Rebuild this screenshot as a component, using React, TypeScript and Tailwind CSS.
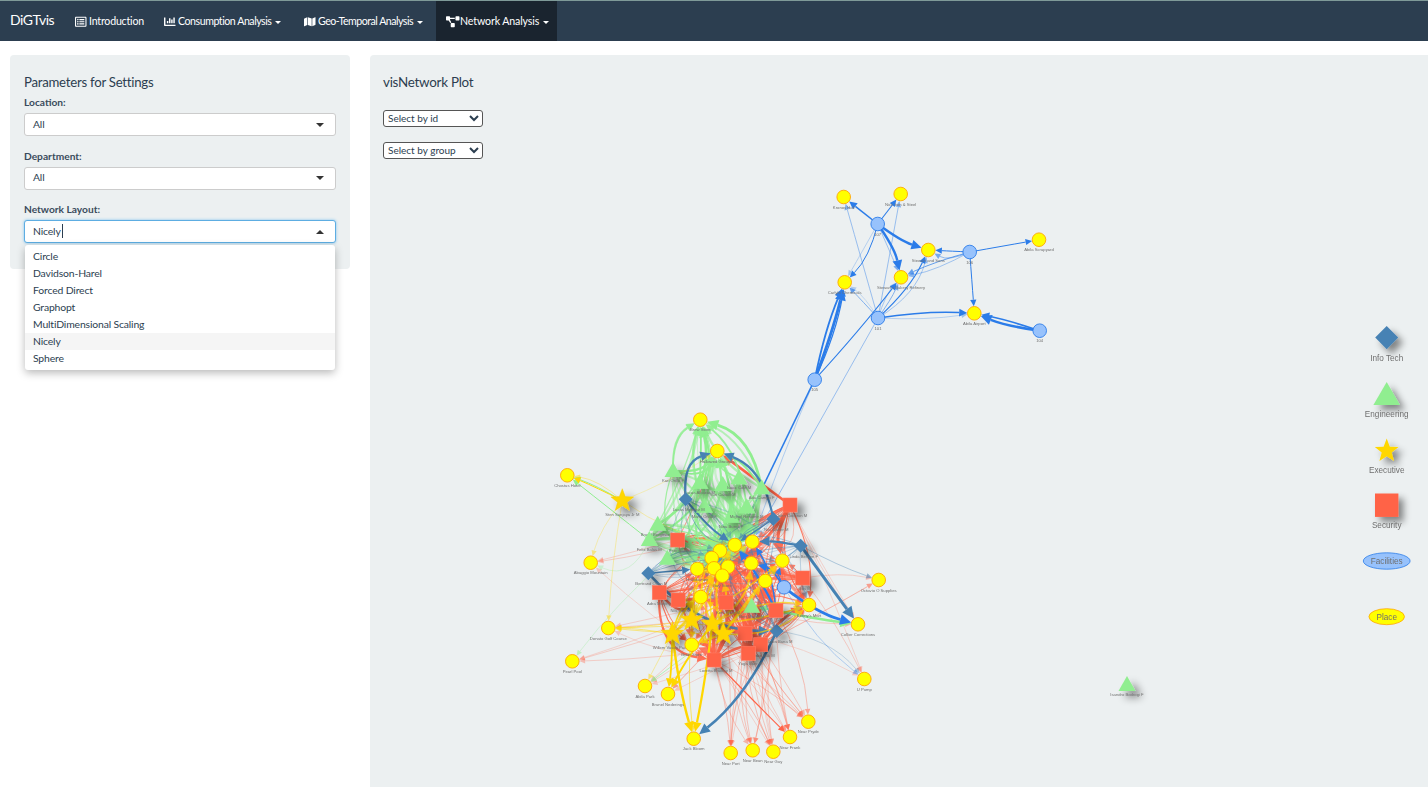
import React from "react";
import { FaRegListAlt, FaChartBar, FaMap, FaProjectDiagram } from "react-icons/fa";

type P = [number, number, string?];
const TOMATO = "#ff6347", GREEN = "#90ee90", STEEL = "#4682b4", GOLD = "#ffd700", BLUE = "#2b7ce9";

let seed = 4242;
const rnd = () => {
  seed = (seed * 1664525 + 1013904223) % 4294967296;
  return seed / 4294967296;
};
const pick = <T,>(a: T[]) => a[Math.floor(rnd() * a.length)];

const topPlaces: Record<string, P> = {
  kronos: [843.7, 197, "Kronos Hall"],
  nick: [900.7, 194, "Nick Iron & Steel"],
  stewart: [928.3, 250, "Stewart and Sons"],
  bakery: [901, 277.3, "Stewart's Bakery Refinery"],
  carlyle: [844.7, 282.3, "Carlyle Chemicals"],
  scrap: [1039, 239.7, "Abila Scrapyard"],
  airport: [974.3, 313.3, "Abila Airport"],
};
const fac: Record<string, P> = {
  f107: [877.7, 224, "107"],
  f101: [878, 318, "101"],
  f106: [969.7, 252, "106"],
  f104: [1039.7, 330.7, "104"],
  f105: [814.7, 379.7, "105"],
  f100: [784, 587.3, ""],
};
const outer: Record<string, P> = {
  brew: [700.3, 419.7, "Brew Store"],
  hall: [717.3, 451, "Hallowed Grounds"],
  chostus: [567.3, 475.3, "Chostus Hotel"],
  abaggio: [590.7, 562.7, "Abaggio Mountain"],
  octavio: [878.7, 580, "Octavio O Supplies"],
  collier: [858, 624.3, "Collier Corrections"],
  upump: [864.3, 679, "U Pump"],
  pryde: [808.3, 721.7, "Near Pryde"],
  frank: [790, 737, "Near Frank"],
  guy: [773.3, 751.7, "Near Guy"],
  bean: [752.7, 750.3, "Near Bean"],
  port: [730.7, 753, "Near Port"],
  jack: [693.7, 738.7, "Jack Bloom"],
  abila: [645, 686, "Abila Park"],
  brunel: [668, 694, "Brunel Nederings"],
  pearl: [572.3, 661.3, "Pearl Pool"],
  donato: [608.3, 628, "Donato Golf Course"],
};
const inner: P[] = [
  [734.7, 545, ""], [752.3, 541.7, ""], [720, 550.7, ""], [711.7, 558, "Kolumbus"],
  [697.3, 569, "Hallokumpe"], [714, 568.3, ""], [728, 566.7, ""], [722.3, 575.7, "Gay Store"],
  [751.3, 563.3, ""], [782.3, 560.7, ""], [765.3, 581, ""], [809, 605, "Kenny's Mart"], [700.7, 597, ""],
  [691.7, 644.7, "Brew Store"],
];
const squares: P[] = [
  [677.7, 540, "Pete Bab M"], [790, 505, "John Cochran M"], [802.7, 578, "Gus M"], [659.3, 592.5, "Adra Murphy M"],
  [678.2, 600, "Nils Jan M"], [726, 602.3, "Kent Stein M"], [776, 610.4, ""], [745, 633.3, ""],
  [760.7, 644.7, "Minke Bak M"], [748.3, 653.3, "Yuga Baer M"], [714, 660, "Loretta Bradley M"],
];
const tris: P[] = [
  [673, 471, "Kari Orilla F"], [699.7, 482.7, "Lucas Alcazar M"], [722.7, 485, "Yuri Caballi M"], [704.3, 506.7, "Marie Orilla F"],
  [731, 516.7, "Nina Burns F"], [657.7, 524.7, "Brand Bergman M"], [649.3, 540, "Felix Balas M"], [667.3, 558.7, ""],
  [739, 478.3, "Isaac Cole M"], [761.7, 488.3, "Ada Campo F"], [746.7, 507.3, "Mighel Resumir M"], [751.7, 606.7, "Bert Meyer M"],
];
const diamonds: P[] = [
  [685.7, 499.3, "Lucas Mendez M"], [648.3, 573.3, "Bertrand Ovan M"], [773.3, 519, "Nils Carter M"],
  [800.7, 545.7, "Linda Bergen F"], [776.7, 631, "Baba Bana M"],
];
const stars: P[] = [
  [622.3, 500.7, "Sten Sanjaya Jr M"], [672.3, 634, "Willem Vasco Pais M"], [691.7, 620, ""], [712.3, 624, ""], [723.3, 634, ""],
];
const isandro: P = [1127, 685, "Isandro Bodrogi F"];

type E = { d: string; head: string; c: string; w: number; o: number };
const edges: E[] = [];
const edge = (a: P, b: P, c: string, w: number, o = 1, bend = 0, r = 7) => {
  const dx = b[0] - a[0], dy = b[1] - a[1];
  const cx = (a[0] + b[0]) / 2 - dy * bend, cy = (a[1] + b[1]) / 2 + dx * bend;
  const ux0 = b[0] - cx, uy0 = b[1] - cy;
  const l = Math.hypot(ux0, uy0) || 1;
  const ux = ux0 / l, uy = uy0 / l;
  const tx = b[0] - ux * r, ty = b[1] - uy * r;
  const hl = 4 + w * 2.6, hw = 1.8 + w * 1.3;
  const bx = tx - ux * hl, by = ty - uy * hl;
  edges.push({
    d: `M${a[0]} ${a[1]}Q${cx.toFixed(1)} ${cy.toFixed(1)} ${bx.toFixed(1)} ${by.toFixed(1)}`,
    head: `${tx.toFixed(1)},${ty.toFixed(1)} ${(bx - uy * hw).toFixed(1)},${(by + ux * hw).toFixed(1)} ${(bx + uy * hw).toFixed(1)},${(by - ux * hw).toFixed(1)}`,
    c, w, o,
  });
};

const { kronos, nick, stewart, bakery, carlyle, scrap, airport } = topPlaces;
const { f107, f101, f106, f104, f105, f100 } = fac;
const { brew, hall, chostus, abaggio, octavio, collier, upump, pryde, frank, guy, bean, port, jack, abila, brunel, pearl, donato } = outer;

// top cluster
edge(f107, kronos, BLUE, 1.5);
edge(f107, nick, BLUE, 1.1);
edge(f107, stewart, BLUE, 2.4, 1, 0.08);
edge(f107, bakery, BLUE, 2.4, 1, -0.1);
edge(f107, carlyle, BLUE, 1, 1, -0.14);
edge(f107, carlyle, BLUE, 0.7, 0.4);
edge(f107, bakery, BLUE, 0.7, 0.6);
edge(f101, kronos, BLUE, 0.8, 0.55);
edge(f101, nick, BLUE, 0.8, 0.55);
edge(f101, carlyle, BLUE, 0.8, 0.7);
edge(f101, carlyle, BLUE, 0.7, 0.3, 0.1);
edge(f101, bakery, BLUE, 0.9, 0.6, 0.05);
edge(f101, bakery, BLUE, 0.9, 0.4, -0.1);
edge(f101, stewart, BLUE, 1.1, 1, 0.1);
edge(f101, stewart, BLUE, 0.8, 0.5, 0.2);
edge(f101, airport, BLUE, 1.6, 1, -0.05);
edge(f101, airport, BLUE, 0.7, 0.4, 0.05);
edge(f106, stewart, BLUE, 1);
edge(f106, stewart, BLUE, 0.8, 0.6, -0.25);
edge(f106, bakery, BLUE, 1, 0.7, 0.04);
edge(f106, bakery, BLUE, 0.8, 0.5, -0.08);
edge(f106, airport, BLUE, 1);
edge(f106, scrap, BLUE, 1);
edge(f104, airport, BLUE, 2.6, 1, -0.06);
edge(f104, airport, BLUE, 1.6, 1, 0.03);
edge(f105, carlyle, BLUE, 2.8, 1, 0.03);
edge(f105, carlyle, BLUE, 1.8, 1, -0.05);
edge(f105, carlyle, BLUE, 1.2, 1, 0.07);
edge(f105, bakery, BLUE, 1.2, 1, 0.02);
edge(f105, inner[0], BLUE, 1.5, 1, 0);
edge(f105, inner[1], BLUE, 0.7, 0.45, 0.02);
edge(f101, inner[1], BLUE, 0.8, 0.55, 0);

// red edges
const lowerSquares = [squares[6], squares[7], squares[8], squares[9], squares[10], squares[5], squares[4]];
[pryde, frank, guy, bean, port].forEach((t, i) => {
  lowerSquares.forEach((s, k) => {
    if (k === 6 && i > 2) return;
    const heavy = i === 1 && k === 4;
    edge(s, t, TOMATO, heavy ? 1.1 : 0.7, heavy ? 1 : 0.3 + rnd() * 0.25, (rnd() - 0.5) * 0.25);
  });
});
squares.forEach((s) => {
  for (let i = 0; i < 18; i++) {
    const b = pick(inner);
    const w = rnd() < 0.18 ? 1.8 + rnd() * 1.6 : 0.5 + rnd() * 0.6;
    edge(s, b, TOMATO, w, 0.55 + rnd() * 0.4, (rnd() - 0.5) * 0.5);
  }
});
[octavio, collier, upump, abila, brunel, pearl, abaggio, donato].forEach((t) => {
  for (let i = 0; i < 3; i++) edge(pick(squares), t, TOMATO, 0.7, 0.28 + rnd() * 0.15, (rnd() - 0.5) * 0.2);
});
edge(squares[1], hall, TOMATO, 2.6, 1, 0);
edge(squares[1], inner[0], TOMATO, 1.4, 0.8, 0.05);
edge(squares[1], inner[1], TOMATO, 1, 0.45, -0.5);
edge(squares[1], inner[1], TOMATO, 0.8, 0.4, -0.9);
edge(squares[0], inner[2], TOMATO, 1.2, 0.95, -0.35);
edge(squares[0], hall, TOMATO, 0.8, 0.8, 0.02);
edge(squares[3], inner[12], TOMATO, 2.4, 0.9, 0.5);
edge(squares[3], squares[10], TOMATO, 2.2, 0.9, 0.45);
edge(squares[10], squares[8], TOMATO, 2.8, 0.9, -0.1);
edge(squares[7], stars[3], TOMATO, 3, 0.9, 0.1);
edge(squares[10], inner[13], TOMATO, 2.2, 0.9, 0.4);
edge(squares[6], stars[4], TOMATO, 2.6, 0.9, -0.1);

// green edges
const greenTargets = [brew, hall, ...inner.slice(0, 7), inner[0], inner[1], inner[2]];
tris.forEach((t, k) => {
  if (k === 11) return;
  for (let i = 0; i < 11; i++) {
    const b = pick(greenTargets);
    edge(t, b, GREEN, 0.7 + rnd() * 1.8, 0.4 + rnd() * 0.55, (rnd() - 0.5) * 0.7);
  }
});
edge(tris[5], brew, GREEN, 2.6, 1, 0.35);
edge(tris[6], brew, GREEN, 2, 1, 0.42);
edge(tris[7], brew, GREEN, 1.6, 0.9, 0.3);
edge(tris[0], hall, GREEN, 2.4, 1, 0.25);
edge(tris[0], hall, GREEN, 1.8, 1, 0.4);
edge(tris[9], brew, GREEN, 2.8, 1, 0.3);
edge(tris[9], hall, GREEN, 2, 1, 0.15);
edge(tris[4], hall, GREEN, 2.4, 1, 0.1);
edge(tris[1], brew, GREEN, 1.8, 1, 0.02);
edge(tris[3], hall, GREEN, 2, 1, -0.15);
edge(tris[10], brew, GREEN, 1.8, 0.9, 0.2);
edge(tris[6], chostus, GREEN, 1, 1, 0);
edge(stars[0], chostus, GREEN, 1, 1, 0.05);
edge(tris[6], abaggio, GREEN, 0.8, 0.35, -0.5);
edge(tris[7], pearl, GREEN, 0.6, 0.5, 0.05);
edge(squares[6], collier, GREEN, 2.6, 1, 0.02);
edge(tris[11], abila, GREEN, 0.8, 0.7, 0);
edge(squares[6], tris[11], GREEN, 1.6, 1, 0);

// steel edges
diamonds.forEach((s) => {
  for (let i = 0; i < 8; i++) {
    edge(s, pick(inner), STEEL, 0.5 + rnd() * 0.8, 0.25 + rnd() * 0.35, (rnd() - 0.5) * 1.1);
  }
});
edge(diamonds[3], collier, STEEL, 3, 1, 0);
edge(diamonds[4], jack, STEEL, 2.6, 1, -0.12);
edge(diamonds[3], inner[1], STEEL, 2.4, 1, 0.05);
edge(diamonds[2], hall, STEEL, 2.2, 1, 0.28);
edge(diamonds[2], inner[0], STEEL, 1.4, 1, 0);
edge(diamonds[0], hall, STEEL, 2.4, 1, -0.4);
edge(diamonds[0], inner[0], STEEL, 2, 1, 0.08);
edge(diamonds[1], diamonds[4], STEEL, 2.6, 0.95, 0.22);
edge(diamonds[3], octavio, STEEL, 0.7, 0.55, 0.04);
edge(diamonds[4], upump, STEEL, 0.7, 0.4, -0.2);
edge(diamonds[1], inner[4], STEEL, 1.6, 1, 0);
edge(f100, collier, BLUE, 2.8, 1, 0.1);
edge(f100, upump, BLUE, 0.7, 0.45, 0.1);
edge(f100, inner[8], BLUE, 1.8, 1, 0.2);
edge(f100, inner[9], BLUE, 1.2, 1, -0.2);
edge(squares[6], inner[0], BLUE, 2.2, 1, 0.05);
edge(squares[6], inner[1], BLUE, 1.4, 1, 0.12);

// gold edges
const goldStars = stars.slice(1);
goldStars.forEach((s) => {
  for (let i = 0; i < 6; i++) edge(s, pick(inner), GOLD, 0.8 + rnd() * 1.4, 0.7, (rnd() - 0.5) * 0.5);
  edge(s, donato, GOLD, 0.8, 0.6, (rnd() - 0.5) * 0.1);
});
edge(stars[1], jack, GOLD, 2.4, 1, 0.04);
edge(stars[2], jack, GOLD, 0.8, 0.7, 0.05);
edge(stars[3], jack, GOLD, 2.2, 1, -0.02);
edge(stars[3], brunel, GOLD, 2, 1, 0.04);
edge(stars[1], brunel, GOLD, 1.8, 1, -0.03);
edge(stars[1], abila, GOLD, 0.7, 0.5, 0);
edge(stars[0], chostus, GOLD, 1, 1, 0.02);
edge(stars[0], chostus, GOLD, 0.7, 0.5, 0.15);
edge(stars[0], abaggio, GOLD, 0.6, 0.45, 0.1);
edge(stars[0], donato, GOLD, 0.6, 0.5, 0.03);
edge(stars[0], inner[0], GOLD, 0.6, 0.5, 0.12);
edge(stars[0], hall, GOLD, 0.6, 0.4, 0.05);

const starPts = (x: number, y: number, R: number) => {
  const pts: string[] = [];
  for (let i = 0; i < 10; i++) {
    const r = i % 2 ? R * 0.42 : R;
    const a = -Math.PI / 2 + (i * Math.PI) / 5;
    pts.push(`${(x + r * Math.cos(a)).toFixed(1)},${(y + r * Math.sin(a)).toFixed(1)}`);
  }
  return pts.join(" ");
};

const Label = ({ x, y, t, s = 4.2 }: { x: number; y: number; t?: string; s?: number }) =>
  t ? (
    <text x={x} y={y} fontSize={s} fill="#6f6f6f" textAnchor="middle" fontFamily="'Liberation Sans',sans-serif">
      {t}
    </text>
  ) : null;

const Circle = ({ p, f, st, dy = 11.5 }: { p: P; f: string; st: string; dy?: number }) => (
  <g>
    <circle cx={p[0]} cy={p[1]} r={6.8} fill={f} stroke={st} strokeWidth={0.9} />
    <Label x={p[0]} y={p[1] + dy} t={p[2]} />
  </g>
);
const Square = ({ p }: { p: P }) => (
  <g>
    <rect x={p[0] - 7} y={p[1] - 7} width={14} height={14} fill={TOMATO} stroke="#ff7a63" strokeWidth={0.6} filter="url(#sh)" />
    <Label x={p[0] + 2} y={p[1] + 12} t={p[2]} />
  </g>
);
const Tri = ({ p }: { p: P }) => (
  <g>
    <polygon points={`${p[0]},${p[1] - 9} ${p[0] + 8.5},${p[1] + 6} ${p[0] - 8.5},${p[1] + 6}`} fill={GREEN} filter="url(#sh)" />
    <Label x={p[0]} y={p[1] + 11} t={p[2]} />
  </g>
);
const Diamond = ({ p }: { p: P }) => (
  <g>
    <polygon points={`${p[0]},${p[1] - 7} ${p[0] + 7},${p[1]} ${p[0]},${p[1] + 7} ${p[0] - 7},${p[1]}`} fill={STEEL} filter="url(#sh)" />
    <Label x={p[0] + 3} y={p[1] + 12} t={p[2]} />
  </g>
);
const Star = ({ p }: { p: P }) => (
  <g>
    <polygon points={starPts(p[0], p[1], 12)} fill={GOLD} stroke="#f2c500" strokeWidth={0.4} filter="url(#sh)" />
    <Label x={p[0]} y={p[1] + 15} t={p[2]} />
  </g>
);

const NetworkDrawing = () => (
  <svg viewBox="370 55 1058 732" className="absolute inset-0 h-full w-full blur-[0.4px]">
    <defs>
      <filter id="sh" x="-80%" y="-80%" width="300%" height="300%">
        <feDropShadow dx="6" dy="6" stdDeviation="4" floodColor="#000" floodOpacity="0.48" />
      </filter>
      <filter id="shLg" x="-80%" y="-80%" width="300%" height="300%">
        <feDropShadow dx="5" dy="5" stdDeviation="3.5" floodColor="#000" floodOpacity="0.45" />
      </filter>
    </defs>
    {edges.map((e, i) => (
      <g key={i} opacity={e.o}>
        <path d={e.d} fill="none" stroke={e.c} strokeWidth={e.w} />
        <polygon points={e.head} fill={e.c} />
      </g>
    ))}
    {tris.map((p, i) => <Tri key={i} p={p} />)}
    <Tri p={isandro} />
    {diamonds.map((p, i) => <Diamond key={i} p={p} />)}
    {squares.map((p, i) => <Square key={i} p={p} />)}
    {stars.map((p, i) => <Star key={i} p={p} />)}
    {Object.values(outer).map((p, i) => <Circle key={i} p={p} f="#ffff00" st="#ffa500" />)}
    {inner.map((p, i) => <Circle key={i} p={p} f="#ffff00" st="#ffa500" />)}
    {Object.values(topPlaces).map((p, i) => <Circle key={i} p={p} f="#ffff00" st="#ffa500" />)}
    {Object.values(fac).map((p, i) => <Circle key={i} p={p} f="#97c2fc" st={BLUE} />)}

    {/* legend */}
    <polygon points="1386.7,326 1398.2,337.6 1386.7,349.2 1375.2,337.6" fill={STEEL} filter="url(#shLg)" />
    <Label x={1386.7} y={361} t="Info Tech" s={8.2} />
    <polygon points="1386.7,382 1400,405 1373.4,405" fill={GREEN} filter="url(#shLg)" />
    <Label x={1386.7} y={417} t="Engineering" s={8.2} />
    <polygon points={starPts(1386.7, 451, 12.5)} fill={GOLD} filter="url(#shLg)" />
    <Label x={1386.7} y={473} t="Executive" s={8.2} />
    <rect x={1375} y={493.5} width={23.4} height={23.4} fill={TOMATO} filter="url(#shLg)" />
    <Label x={1386.7} y={528} t="Security" s={8.2} />
    <ellipse cx={1386.7} cy={561} rx={23.4} ry={8.2} fill="#97c2fc" stroke={BLUE} strokeWidth={0.8} />
    <Label x={1386.7} y={563.6} t="Facilities" s={8.2} />
    <ellipse cx={1386.7} cy={616.7} rx={17.8} ry={8} fill="#ffff00" stroke="#ffa500" strokeWidth={0.8} />
    <Label x={1386.7} y={619.5} t="Place" s={8.2} />
  </svg>
);

const NavItem = ({ icon, text, track, w, caret = true, active = false }: { icon: React.ReactNode; text: string; track: string; w: string; caret?: boolean; active?: boolean }) => (
  <div className={`flex h-full items-center pl-[10px] pt-[2px] text-[10.6px] text-white ${w} ${active ? "bg-[#1a242f]" : ""}`}>
    <span className="flex w-[14px] shrink-0 items-center justify-start text-[11.5px]">{icon}</span>
    <span className={`whitespace-nowrap ${track}`}>{text}</span>
    {caret && <span className="ml-[3.5px] inline-block border-x-[3px] border-t-[3px] border-x-transparent border-t-white" />}
  </div>
);

const Field = ({ label, value, open = false }: { label: string; value: string; open?: boolean }) => (
  <div className="flex flex-col">
    <div className="mb-[3px] h-[15px] text-[10.2px] leading-[15px] font-bold text-[#3a4b5c]">{label}</div>
    <div
      className={`flex h-[23px] items-center justify-between rounded-[3px] border bg-white pr-[11px] pl-[8px] text-[10.4px] tracking-[-0.15px] ${
        open ? "border-[#5dade2] shadow-[0_0_3px_#7cc0ee]" : "border-[#cccccc]"
      }`}
    >
      <span className="flex items-center">
        {value}
        {open && <span className="ml-px inline-block h-[14px] w-px bg-[#2c3e50]" />}
      </span>
      {open ? (
        <span className="inline-block border-x-[4px] border-b-[4px] border-x-transparent border-b-[#333]" />
      ) : (
        <span className="inline-block border-x-[4px] border-t-[4px] border-x-transparent border-t-[#333]" />
      )}
    </div>
  </div>
);

const options = ["Circle", "Davidson-Harel", "Forced Direct", "Graphopt", "MultiDimensional Scaling", "Nicely", "Sphere"];

export default function App() {
  return (
    <div className="flex h-[787px] w-[1428px] flex-col overflow-hidden bg-white font-['Lato',sans-serif] text-[#2c3e50]">
      <nav className="flex h-[41px] shrink-0 items-stretch border-t border-[#7f9a98] bg-[#2c3e50]">
        <div className="flex w-[65px] items-center pb-[4px] pl-[10px] text-[14px] tracking-[-0.5px] text-white">DiGTvis</div>
        <NavItem icon={<FaRegListAlt />} text="Introduction" track="tracking-[-0.2px]" w="w-[89px]" caret={false} />
        <NavItem icon={<FaChartBar />} text="Consumption Analysis" track="tracking-[-0.45px]" w="w-[140px]" />
        <NavItem icon={<FaMap />} text="Geo-Temporal Analysis" track="tracking-[-0.5px]" w="w-[142px]" />
        <NavItem icon={<FaProjectDiagram className="text-[13.5px]" />} text="Network Analysis" track="tracking-[-0.12px]" w="w-[121px]" active />
      </nav>

      <main className="flex min-h-0 flex-1 gap-[20px] pt-[14px] pl-[10px]">
        <aside className="relative w-[340px] shrink-0">
          <div className="flex h-[214px] flex-col rounded-[4px] bg-[#ecf0f1] px-[14px] pt-[19px]">
            <h2 className="mb-[4px] h-[17px] text-[13.2px] leading-[17px] font-normal tracking-[-0.25px]">Parameters for Settings</h2>
            <div className="flex flex-col gap-[12.5px]">
              <Field label="Location:" value="All" />
              <Field label="Department:" value="All" />
              <Field label="Network Layout:" value="Nicely" open />
            </div>
          </div>
          <ul className="absolute top-[190px] left-[15px] w-[310px] rounded-[3px] bg-white py-[3px] text-[10.4px] tracking-[-0.15px] shadow-[0_3px_8px_rgba(0,0,0,0.28)]">
            {options.map((o) => (
              <li key={o} className={`h-[17px] pl-[8px] leading-[17px] ${o === "Nicely" ? "bg-[#f5f5f5]" : ""}`}>
                {o}
              </li>
            ))}
          </ul>
        </aside>

        <section className="relative min-w-0 flex-1 rounded-tl-[4px] bg-[#ecf0f1]">
          <NetworkDrawing />
          <div className="relative flex flex-col items-start pt-[19px] pl-[13px]">
            <h2 className="mb-[19px] h-[17px] text-[13.4px] leading-[17px] font-normal tracking-[-0.25px]">visNetwork Plot</h2>
            <select className="mb-[15px] h-[17px] w-[100px] rounded-[3px] border border-[#555] bg-white pb-[2px] text-[10px] text-[#2c3e50]">
              <option>Select by id</option>
            </select>
            <select className="h-[17px] w-[100px] rounded-[3px] border border-[#555] bg-white pb-[2px] text-[10px] text-[#2c3e50]">
              <option>Select by group</option>
            </select>
          </div>
        </section>
      </main>
    </div>
  );
}
